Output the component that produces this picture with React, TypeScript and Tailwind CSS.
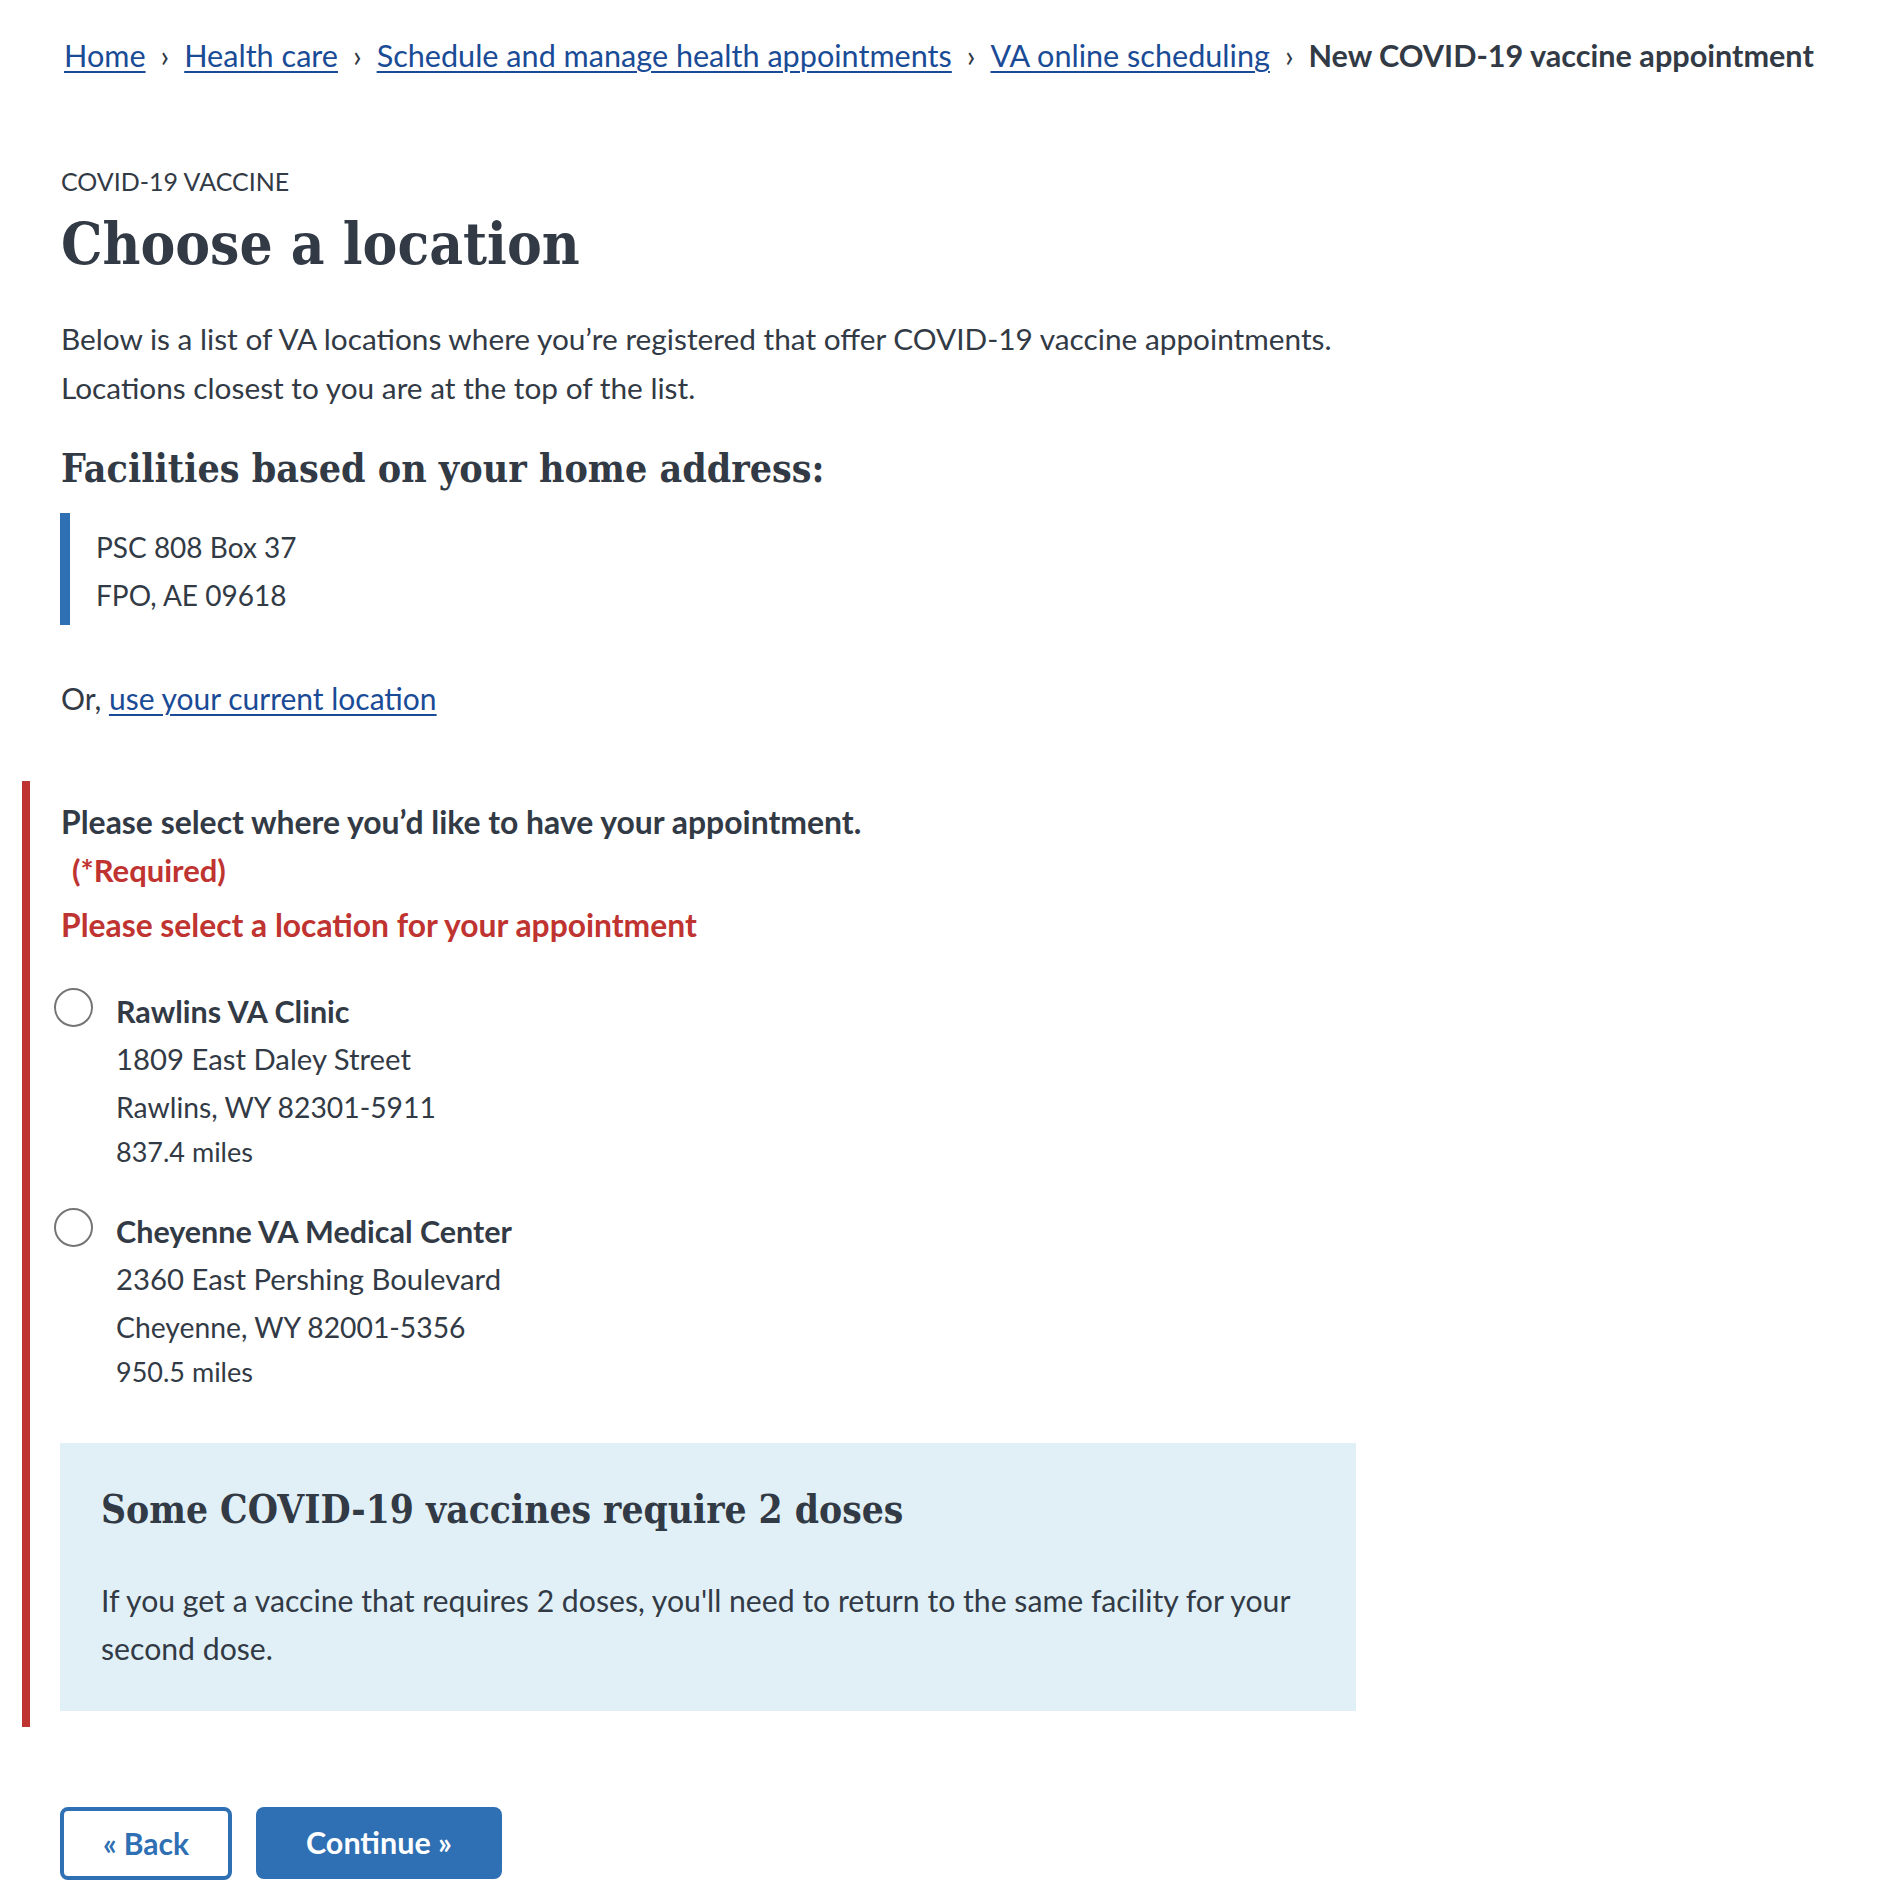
const serif = "font-['DejaVu_Serif_Condensed','DejaVu_Serif',serif] font-bold";

const crumbs = [
  "Home",
  "Health care",
  "Schedule and manage health appointments",
  "VA online scheduling",
];

const facilities = [
  {
    name: "Rawlins VA Clinic",
    street: "1809 East Daley Street",
    city: "Rawlins, WY 82301-5911",
    distance: "837.4 miles",
  },
  {
    name: "Cheyenne VA Medical Center",
    street: "2360 East Pershing Boulevard",
    city: "Cheyenne, WY 82001-5356",
    distance: "950.5 miles",
  },
];

function Breadcrumbs() {
  return (
    <nav className="flex items-center pl-[64px] pt-[32px] text-[30.6px] leading-[48px] whitespace-nowrap">
      {crumbs.map((c) => (
        <span key={c} className="flex items-center">
          <a
            href="#"
            className="text-[#1a4b96] underline decoration-[2px] underline-offset-[4px]"
          >
            {c}
          </a>
          <span className="mx-[15px] text-[#323a45]">›</span>
        </span>
      ))}
      <span className="font-bold">New COVID-19 vaccine appointment</span>
    </nav>
  );
}

function FacilityOption({
  facility,
  first,
}: {
  facility: (typeof facilities)[number];
  first?: boolean;
}) {
  return (
    <label className={`flex ${first ? "mt-[38px]" : "mt-[34px]"}`}>
      <span className="-ml-[7px] mt-px h-[39px] w-[39px] shrink-0 rounded-full border-2 border-[#757575] bg-white" />
      <span className="ml-[23px] flex flex-col">
        <span className="text-[30.5px] font-bold leading-[48px]">{facility.name}</span>
        <span className="text-[29.3px] leading-[48px]">{facility.street}</span>
        <span className="text-[28.3px] leading-[48px]">{facility.city}</span>
        <span className="text-[27px] leading-[42px]">{facility.distance}</span>
      </span>
    </label>
  );
}

export default function App() {
  return (
    <div className="min-h-screen bg-white pb-[8px] font-[Lato,sans-serif] text-[#323a45]">
      <Breadcrumbs />

      <main className="ml-[61px] w-[1295px]">
        <div className="mt-[77px] text-[25px] uppercase leading-[48px]">COVID-19 vaccine</div>
        <h1 className={`${serif} mt-[3px] text-[58px] leading-[72px]`}>Choose a location</h1>

        <p className="mt-[34px] text-[29.8px] leading-[49px]">
          <span className="block whitespace-nowrap">
            Below is a list of VA locations where you’re registered that offer COVID-19 vaccine appointments.
          </span>
          <span className="block">Locations closest to you are at the top of the list.</span>
        </p>

        <h2 className={`${serif} mt-[28px] text-[39px] leading-[56px]`}>
          Facilities based on your home address:
        </h2>

        <div className="-ml-px mt-[17px] border-l-[10px] border-[#2f6fb3] pb-[6px] pl-[26px] pt-[10px] text-[28px] leading-[48px]">
          <div>PSC 808 Box 37</div>
          <div>FPO, AE 09618</div>
        </div>

        <p className="mt-[49px] text-[30px] leading-[48px]">
          Or,{" "}
          <a href="#" className="text-[#1a4b96] underline decoration-[2px] underline-offset-[4px]">
            use your current location
          </a>
        </p>

        <div className="-ml-[39px] mt-[59px] border-l-[8px] border-[#bf3330] pb-[16px] pl-[31px] pt-[17px]">
          <div className="text-[31.9px] font-bold leading-[48px]">
            Please select where you’d like to have your appointment.
          </div>
          <div className="pl-[11px] text-[31px] font-bold leading-[49px] text-[#bf3330]">(*Required)</div>
          <div className="mt-[6px] text-[31.8px] font-bold leading-[48px] text-[#bf3330]">
            Please select a location for your appointment
          </div>

          {facilities.map((f, i) => (
            <FacilityOption key={f.name} facility={f} first={i === 0} />
          ))}

          <div className="-ml-px mt-[50px] bg-[#e1f0f7] pb-[39px] pl-[41px] pt-[39px]">
            <h3 className={`${serif} text-[38.6px] leading-[56px]`}>Some COVID-19 vaccines require 2 doses</h3>
            <p className="mt-[38px] text-[30.2px] leading-[48px]">
              <span className="block whitespace-nowrap">
                If you get a vaccine that requires 2 doses, you'll need to return to the same facility for your
              </span>
              <span className="block">second dose.</span>
            </p>
          </div>
        </div>

        <div className="-ml-px mt-[80px] flex gap-[24px]">
          <button className="flex h-[73px] w-[172px] items-center justify-center rounded-[8px] border-4 border-[#2f6fb3] bg-white text-[30px] font-bold text-[#2f6fb3]">
            « Back
          </button>
          <button className="flex h-[72px] w-[246px] items-center justify-center rounded-[8px] bg-[#2f6fb3] text-[30.5px] font-bold text-white">
            Continue »
          </button>
        </div>
      </main>
    </div>
  );
}
